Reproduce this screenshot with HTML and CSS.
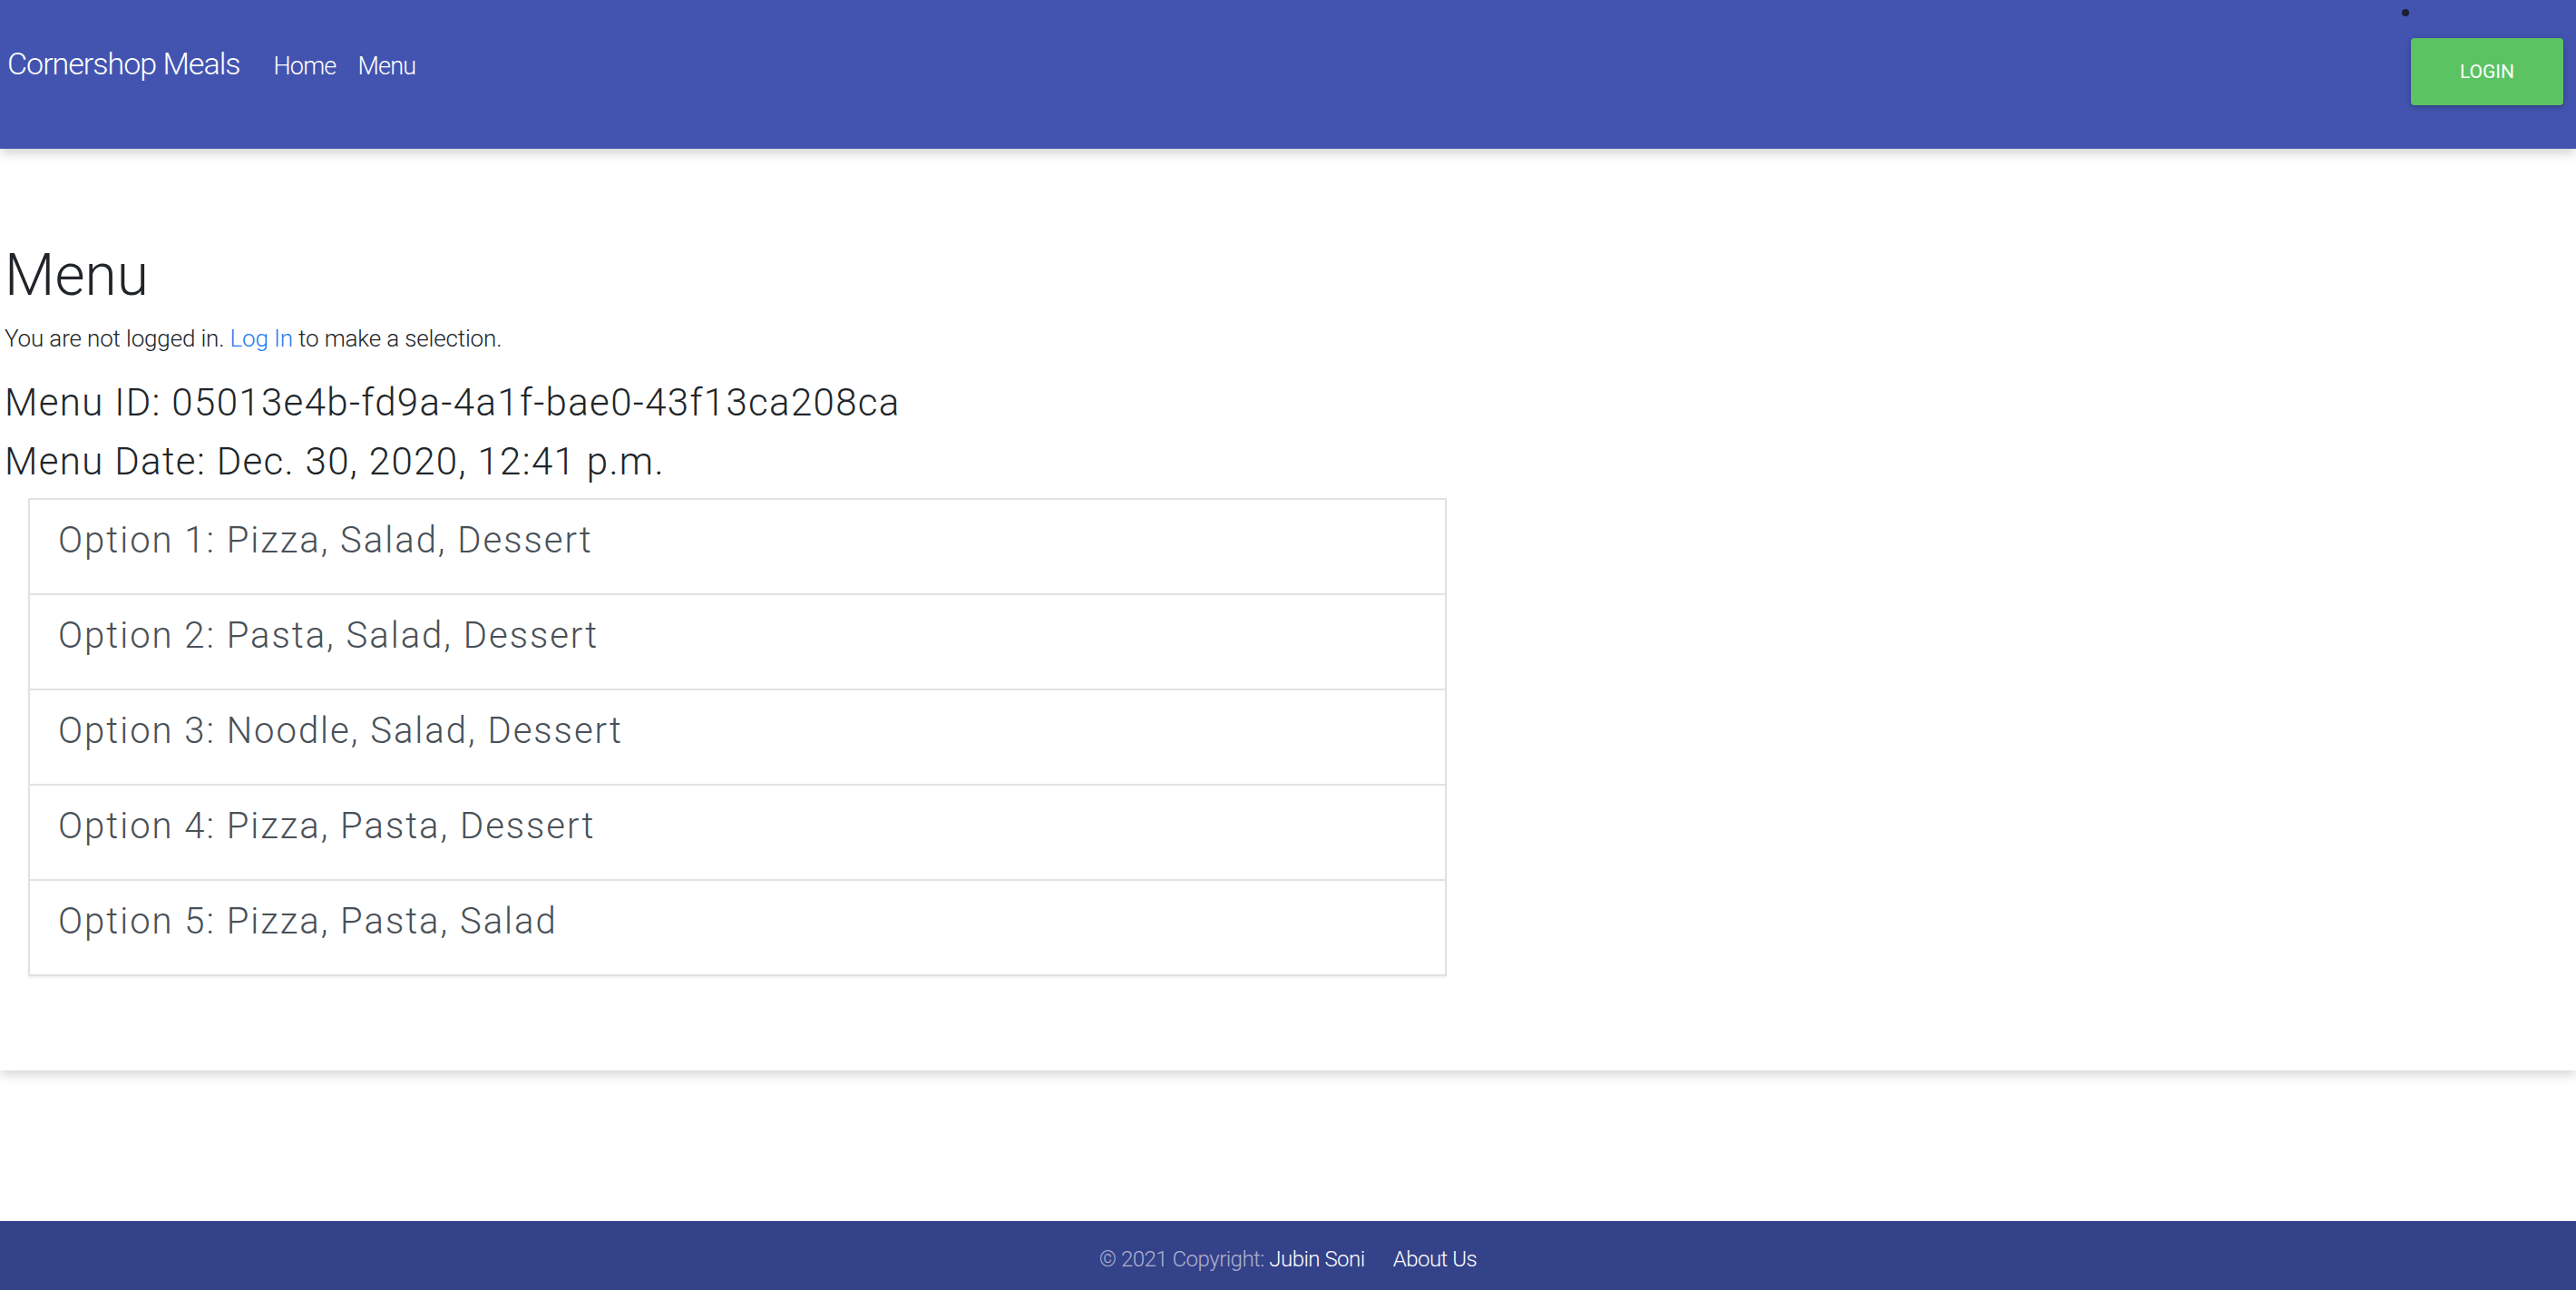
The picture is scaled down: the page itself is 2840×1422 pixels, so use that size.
FILE: index.html
```html
<!DOCTYPE html>
<html lang="en">
<head>
<meta charset="utf-8">
<title>Cornershop Meals</title>
<link rel="stylesheet" href="styles.css">
</head>
<body>
<header class="navbar">
  <span class="dot"></span>
  <div class="nav-left">
    <a class="brand" href="#">Cornershop Meals</a>
    <a class="nav-link" href="#">Home</a>
    <a class="nav-link" href="#">Menu</a>
  </div>
  <a class="btn-login" href="#">LOGIN</a>
</header>
<main class="card">
  <h1 class="title">Menu</h1>
  <p class="notice">You are not logged in. <a href="#" class="link">Log In</a> to make a selection.</p>
  <h4 class="meta meta-id">Menu ID: 05013e4b-fd9a-4a1f-bae0-43f13ca208ca</h4>
  <h4 class="meta meta-date">Menu Date: Dec. 30, 2020, 12:41 p.m.</h4>
  <ul class="options">
    <li class="option">Option 1: Pizza, Salad, Dessert</li>
    <li class="option">Option 2: Pasta, Salad, Dessert</li>
    <li class="option">Option 3: Noodle, Salad, Dessert</li>
    <li class="option">Option 4: Pizza, Pasta, Dessert</li>
    <li class="option">Option 5: Pizza, Pasta, Salad</li>
  </ul>
</main>
<div class="spacer"></div>
<footer class="footer">
  <span class="copy">© 2021 Copyright: <a href="#" class="foot-link">Jubin Soni</a></span>
  <a href="#" class="foot-link about">About Us</a>
</footer>
</body>
</html>
```
FILE: styles.css
```css
html, body {
  margin: 0;
  padding: 0;
}
body {
  font-family: Roboto, "Liberation Sans", sans-serif;
  font-weight: 300;
  color: #212529;
  background: #ffffff;
  height: 1422px;
  display: flex;
  flex-direction: column;
}
a { text-decoration: none; }

.navbar {
  position: relative;
  z-index: 2;
  height: 164px;
  flex: 0 0 164px;
  box-sizing: border-box;
  background: #4254b0;
  display: flex;
  align-items: flex-start;
  padding: 0 14px 0 8px;
  box-shadow: 0 4px 12px rgba(0, 0, 0, 0.2);
}
.dot {
  position: absolute;
  left: 2648px;
  top: 10px;
  width: 8px;
  height: 8px;
  border-radius: 50%;
  background: #1c1f2e;
}
.nav-left {
  display: flex;
  align-items: baseline;
  margin-top: 45px;
}
.brand {
  color: #ffffff;
  font-size: 34px;
  font-weight: 300;
  line-height: 51px;
  letter-spacing: -1px;
  margin-right: 25px;
}
.nav-link {
  color: #ffffff;
  font-size: 27px;
  font-weight: 300;
  line-height: 40px;
  letter-spacing: -0.8px;
  padding: 0 12px;
}
.btn-login {
  margin-left: auto;
  margin-top: 42px;
  width: 168px;
  height: 74px;
  border-radius: 4px;
  background: #5cc363;
  color: #ffffff;
  font-size: 21px;
  font-weight: 400;
  display: flex;
  align-items: center;
  justify-content: center;
  box-shadow: 0 2px 5px rgba(0, 0, 0, 0.16), 0 2px 10px rgba(0, 0, 0, 0.12);
}

.card {
  position: relative;
  z-index: 1;
  background: #ffffff;
  padding: 102px 0 104px 5px;
  box-shadow: 0 4px 12px rgba(0, 0, 0, 0.18);
}
.title {
  margin: 0;
  font-size: 64px;
  font-weight: 300;
  line-height: 76.8px;
}
.notice {
  margin: 11px 0 0 0;
  font-size: 26px;
  line-height: 39px;
  letter-spacing: -0.15px;
}
.link { color: #1e7cf3; }
.meta {
  margin: 0;
  font-size: 42px;
  font-weight: 300;
  line-height: 50.4px;
  letter-spacing: 1.35px;
}
.meta-id { margin-top: 26px; }
.meta-date { margin-top: 15px; }

.options {
  list-style: none;
  margin: 14px 0 0 26px;
  padding: 0;
  width: 1564px;
  box-sizing: border-box;
  border: 2px solid #e2e2e2;
  box-shadow: 0 2px 2px rgba(0, 0, 0, 0.06);
}
.option {
  height: 105px;
  box-sizing: border-box;
  padding: 21px 0 0 31px;
  font-size: 40px;
  line-height: 48px;
  letter-spacing: 2px;
  color: #495057;
  border-top: 2px solid #e2e2e2;
}
.option:first-child {
  border-top: 0;
  height: 103px;
}

.spacer { flex: 1 1 auto; }

.footer {
  flex: 0 0 76px;
  box-sizing: border-box;
  background: #34428a;
  padding-top: 8px;
  display: flex;
  justify-content: center;
  align-items: flex-start;
  font-size: 24px;
  line-height: 68px;
  letter-spacing: -0.5px;
  gap: 31px;
}
.copy { color: rgba(255, 255, 255, 0.6); }
.foot-link { color: #ffffff; }
```
